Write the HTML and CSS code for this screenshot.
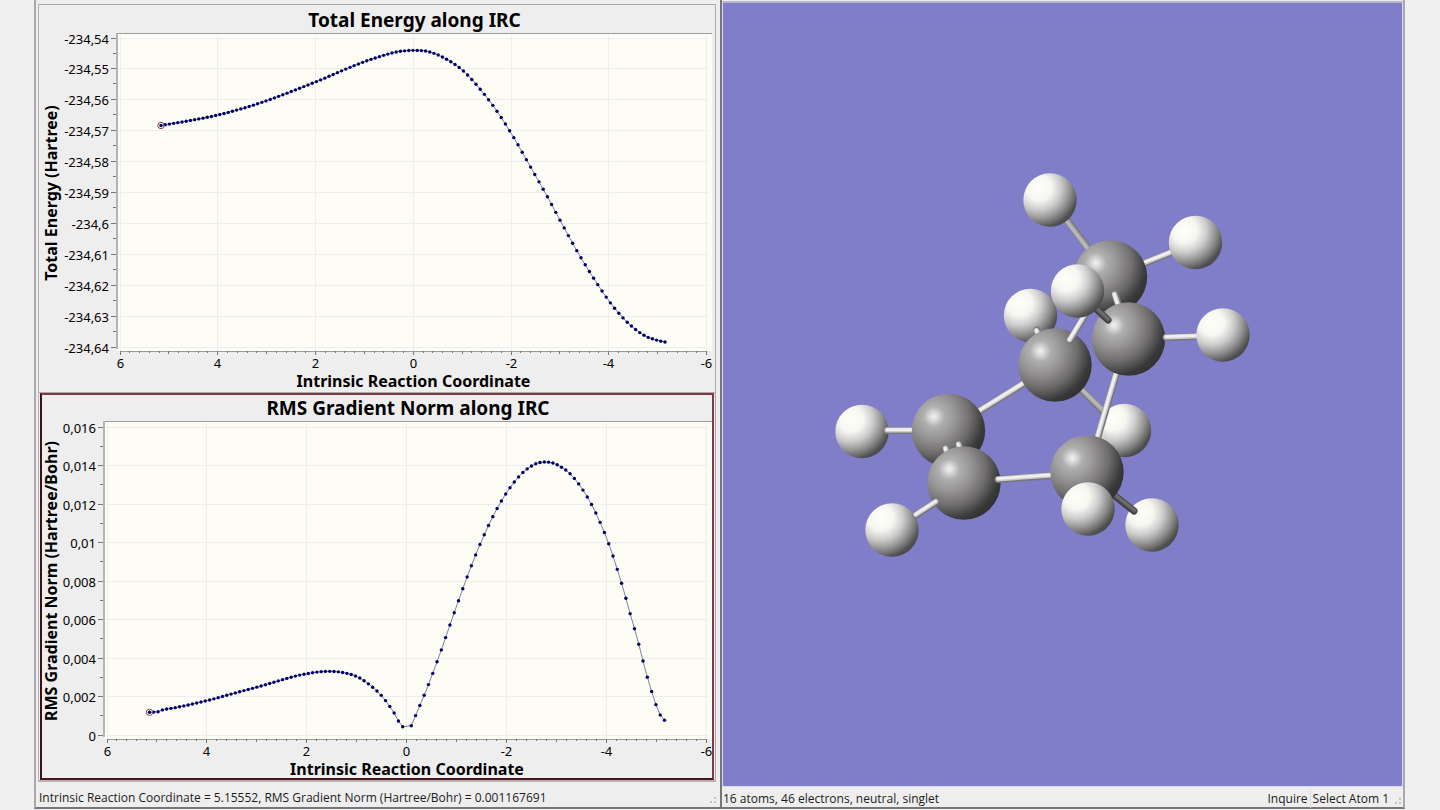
FILE: index.html
```html
<!DOCTYPE html>
<html lang="en">
<head>
<meta charset="utf-8">
<title>IRC viewer</title>
<link rel="stylesheet" href="styles.css">
</head>
<body>
<main class="workspace">
  <section class="window plots" aria-label="IRC plots">
    <div class="panels">
      <svg class="chart" id="energy" viewBox="39 5 676 387" role="img" aria-label="Total Energy along IRC"></svg>
      <svg class="chart chart-active" id="gradient" viewBox="42 395 670 383" role="img" aria-label="RMS Gradient Norm along IRC"></svg>
    </div>
    <footer class="status status-left">
      <span>Intrinsic Reaction Coordinate = 5.15552, RMS Gradient Norm (Hartree/Bohr) = 0.001167691</span>
      <i class="grip"></i>
    </footer>
  </section>
  <section class="window viewer" aria-label="Molecule">
    <svg class="molecule" id="molecule" viewBox="723 3 679 783" role="img" aria-label="Molecule model">
      <defs>
        <radialGradient id="hydrogen" cx=".29" cy=".27" r=".84">
          <stop offset="0" stop-color="#fffffa"/>
          <stop offset=".28" stop-color="#f7f7f2"/>
          <stop offset=".5" stop-color="#cccbcb"/>
          <stop offset=".72" stop-color="#8c8a8a"/>
          <stop offset=".9" stop-color="#504f4f"/>
          <stop offset="1" stop-color="#494848"/>
        </radialGradient>
        <radialGradient id="carbon" cx=".3" cy=".31" r=".83">
          <stop offset="0" stop-color="#f2f2f2"/>
          <stop offset=".06" stop-color="#dddddd"/>
          <stop offset=".17" stop-color="#b0afb0"/>
          <stop offset=".36" stop-color="#969495"/>
          <stop offset=".6" stop-color="#6e6c6d"/>
          <stop offset=".82" stop-color="#3a393a"/>
          <stop offset="1" stop-color="#2e2d2e"/>
        </radialGradient>
      </defs>
    </svg>
    <footer class="status status-right">
      <span class="summary">16 atoms, 46 electrons, neutral, singlet</span>
      <span class="mode">Inquire</span>
      <span class="hint">Select Atom 1</span>
      <i class="grip"></i>
    </footer>
  </section>
</main>
<script src="app.js"></script>
</body>
</html>
```
FILE: styles.css
```css
* { box-sizing: border-box; }

body {
  margin: 0;
  background: #f0f0f0;
  color: #000;
  font-family: "Noto Sans", "Open Sans", sans-serif;
}

.workspace {
  display: grid;
  grid-template-columns: 686fr 685fr;
  height: 100vh;
  padding: 0 35px 1px 34px;
}

.window {
  display: flex;
  flex-direction: column;
  min-width: 0;
  border-bottom: 2px solid #77757a;
  background: #efeeee;
}

.plots {
  border-left: 2px solid #aaa8ae;
  padding: 4px 4px 0 2px;
}

.panels {
  display: flex;
  flex: 1;
  flex-direction: column;
  min-height: 0;
  border-right: 1px solid #aaa8a8;
  border-bottom: 2px solid #b8b0ac;
  border-left: 1px solid #b5b3b3;
}

.chart {
  display: block;
  flex: 387 1 0;
  min-height: 0;
  width: 100%;
  border-top: 1px solid #aaa8a8;
  border-bottom: 1px solid #aaa8a8;
  background: #efeeee;
}

.chart-active {
  flex-grow: 383;
  margin: 0 1px;
  width: calc(100% - 2px);
  border: 2px solid #7d3a44;
  border-left-color: #3b1019;
  border-bottom-color: #4b141e;
}

.plot-area { fill: #fdfdf5; }
.grid-line { stroke: #eeeef0; }
.axis-line { stroke: #9c9ca0; }
.axis-wide { stroke: #b4b4b6; stroke-width: 2; }
.tick { stroke: #77777b; }
.curve { fill: none; stroke: #8080a0; }
.point { fill: #00006c; }
.selected { fill: none; stroke: #8a4050; }
.tick-label { font-size: 13px; }
.axis-title { font-size: 16px; font-weight: 700; text-anchor: middle; }
.chart-title { font-size: 19px; font-weight: 700; text-anchor: middle; }
.end { text-anchor: end; }
.middle { text-anchor: middle; }

.viewer {
  border-right: 2px solid #aaa8ae;
  border-left: 2px solid #77757a;
  padding-top: 1px;
}

.molecule {
  display: block;
  flex: 1;
  min-height: 0;
  width: 100%;
  border: 1px solid #dddaf0;
  border-top: 2px solid #b8b6cc;
  background: #807ec8;
}

.status {
  display: flex;
  flex: none;
  align-items: center;
  color: #1c1c1c;
  font-family: "Open Sans", sans-serif;
  font-size: 12px;
  line-height: 18px;
}

.status-left { height: 25px; padding: 6px 0 0 1px; }
.status-right { height: 20px; padding: 4px 2px 0 1px; }
.summary { flex: 1; }
.mode { padding-right: 2px; }
.hint { border-left: 1px solid #dcdada; padding-left: 2px; }

.grip {
  width: 6px;
  height: 6px;
  margin: 4px 0 0 auto;
  border: 2px dotted #c4c2c2;
  border-top: 0;
  border-left: 0;
}

.hint + .grip { margin-left: 6px; }
```
FILE: app.js
```js
const NS = "http://www.w3.org/2000/svg";

function add(parent, name, attrs, text) {
  const el = document.createElementNS(NS, name);
  for (const key in attrs) el.setAttribute(key, attrs[key]);
  if (text !== undefined) el.textContent = text;
  parent.appendChild(el);
  return el;
}

// Cubic Hermite interpolation through the sampled curve.
function interpolate(samples, x) {
  let i = 0;
  while (i < samples.length - 2 && x > samples[i + 1][0]) i++;
  const slope = (a, b) => (samples[b][1] - samples[a][1]) / (samples[b][0] - samples[a][0]);
  const tangent = k => slope(Math.max(0, k - 1), Math.min(samples.length - 1, k + 1));
  const [x0, y0] = samples[i], [x1, y1] = samples[i + 1];
  const h = x1 - x0, t = (x - x0) / h;
  return (2 * t ** 3 - 3 * t ** 2 + 1) * y0 + (t ** 3 - 2 * t ** 2 + t) * h * tangent(i) +
    (3 * t ** 2 - 2 * t ** 3) * y1 + (t ** 3 - t ** 2) * h * tangent(i + 1);
}

function drawChart(c) {
  const svg = document.getElementById(c.id);
  const zero = (c.x6 + 706.5) / 2, unit = (706.5 - c.x6) / 12;
  const middle = (c.left + 712) / 2;
  const line = (cls, x1, y1, x2, y2) => add(svg, "line", { class: cls, x1, y1, x2, y2 });
  const snap = v => Math.floor(v) + 0.5;

  add(svg, "text", { class: "chart-title", x: middle, y: c.top - 6 }, c.title);
  add(svg, "rect", { class: "plot-area", x: c.left, y: c.top, width: 712 - c.left, height: c.bottom - c.top });
  line("axis-line", c.left - 1, c.top + 0.5, 712, c.top + 0.5);
  line("axis-wide", c.left, c.top, c.left, c.bottom - 2);
  line("axis-line", c.x6, c.bottom + 0.5, 707, c.bottom + 0.5);

  const step = (c.yEnd - c.yStart) / (c.labels.length - 1);
  c.labels.forEach((label, i) => {
    const y = snap(c.yStart + i * step);
    line("grid-line", c.left + 2, y, 708, y);
    line("tick", c.left - 6, y, c.left - 1, y);
    if (i < c.labels.length - 1) {
      const half = snap(y + step / 2);
      line("tick", c.left - 4, half, c.left - 1, half);
    }
    add(svg, "text", { class: "tick-label end", x: c.left - 8, y: y + 5 }, label);
  });

  for (let v = 30; v >= -30; v--) {
    const x = snap(zero - v / 5 * unit);
    const major = v % 10 === 0;
    if (major) line("grid-line", x, c.top + 2, x, c.bottom);
    line("tick", x, c.bottom, x, c.bottom + (major ? 4 : v % 5 === 0 ? 3 : 2));
    if (major) add(svg, "text", { class: "tick-label middle", x, y: c.bottom + 17 }, String(-v / -5));
  }
  add(svg, "text", { class: "axis-title", x: middle - 1, y: c.bottom + 36 }, "Intrinsic Reaction Coordinate");
  add(svg, "text", { class: "axis-title", transform: `translate(57 ${c.labelY}) rotate(-90)` }, c.yTitle);

  const first = c.samples[0], last = c.samples[c.samples.length - 1];
  const points = [];
  for (let i = 0; i <= 120; i++) {
    if (i === c.skip) continue;
    const x = first[0] + (last[0] - first[0]) * i / 120;
    points.push([x, interpolate(c.samples, x)]);
  }
  add(svg, "polyline", { class: "curve", points: points.map(p => p.join()).join(" ") });
  for (const [x, y] of points) add(svg, "circle", { class: "point", cx: x, cy: y, r: 1.7 });
  add(svg, "circle", { class: "selected", cx: first[0], cy: first[1], r: 3.2 });
}

drawChart({
  id: "energy", title: "Total Energy along IRC", yTitle: "Total Energy (Hartree)",
  x6: 120, left: 117, top: 33, bottom: 351, yStart: 38, yEnd: 347, labelY: 193,
  labels: ["-234,54", "-234,55", "-234,56", "-234,57", "-234,58", "-234,59", "-234,6", "-234,61", "-234,62", "-234,63", "-234,64"],
  samples: [[161, 125.5], [190, 120.5], [220, 114.5], [262, 102.3], [316.7, 81.5], [341.3, 71], [362.7, 62.3],
    [383.7, 55.3], [396.7, 51.9], [405, 50.8], [417.7, 50.4], [430, 52], [446.7, 59.3], [463.7, 71.3], [480.3, 89.3],
    [497, 111.3], [514, 138], [530.7, 167.3], [547.7, 197.3], [560.3, 220.7], [577, 251], [593.7, 278.3],
    [610.3, 302.7], [627.3, 322.3], [644, 335.3], [656.3, 340], [665, 342]]
});

drawChart({
  id: "gradient", title: "RMS Gradient Norm along IRC", yTitle: "RMS Gradient Norm (Hartree/Bohr)",
  x6: 107, left: 104, top: 421, bottom: 739, yStart: 427, yEnd: 735, labelY: 581, skip: 60,
  labels: ["0,016", "0,014", "0,012", "0,01", "0,008", "0,006", "0,004", "0,002", "0"],
  samples: [[149.5, 712.3], [158, 711.7], [162.3, 709.9], [178.7, 707], [209.3, 700], [235, 693], [261, 686],
    [290.7, 677.3], [303.7, 674.3], [320.7, 671.7], [334, 671.5], [346.7, 673.3], [359.7, 678], [376.7, 690.7],
    [385.3, 700.3], [393.7, 712.3], [402.3, 726.5], [411.3, 725.7], [415.3, 716.3], [428.3, 685], [441.3, 650],
    [454, 613.3], [471, 566.7], [484, 535.3], [497, 508.7], [510, 487.7], [522.7, 472.7], [535.3, 464],
    [546.7, 462], [557, 464.7], [570, 473.7], [582.7, 489.7], [595.7, 512.7], [608.7, 543.7], [621.3, 582.3],
    [629.7, 612], [638.7, 644], [647, 676], [655.7, 704], [659.7, 714], [664.5, 720.3]]
});

const molecule = document.getElementById("molecule");

function atom(kind, cx, cy) {
  add(molecule, "circle", { cx, cy, r: kind === "carbon" ? 36.7 : 26.7, fill: `url(#${kind})` });
}

const tones = {
  light: ["#77767c", "#cccccc", "#f0f0f0"],
  grey: ["#79787d", "#a5a5a5", "#b9b9b9"],
  dark: ["#3c3c3d", "#555455", "#6e6d6e"]
};

function bond(x1, y1, x2, y2, tone = "light") {
  const length = Math.hypot(x2 - x1, y2 - y1);
  let nx = (y2 - y1) / length, ny = -(x2 - x1) / length;
  if (nx + ny > 0) { nx = -nx; ny = -ny; }
  [[7, 0], [5, 0.6], [2.6, 0.9]].forEach(([width, shift], i) => add(molecule, "line", {
    x1: x1 + nx * shift, y1: y1 + ny * shift, x2: x2 + nx * shift, y2: y2 + ny * shift,
    stroke: tones[tone][i], "stroke-width": width, "stroke-linecap": "round"
  }));
}

// Drawn from back to front.
bond(1060, 211, 1095, 257, "grey");
atom("hydrogen", 1050, 200);
bond(1125, 271, 1185, 247);
atom("hydrogen", 1195.5, 242.5);
atom("carbon", 1110.5, 277);
bond(1115, 294, 1121, 312);
atom("hydrogen", 1030.5, 315.5);
bond(1037, 330, 1042, 342);
bond(970, 417, 1040, 373.5);
bond(1070, 379, 1115, 423, "grey");
atom("hydrogen", 1124.5, 430.5);
atom("carbon", 1055, 365);
bond(1090, 307, 1070, 340);
bond(1122, 355, 1094, 450);
atom("carbon", 1128.5, 339);
bond(1166, 337.5, 1210, 336);
atom("hydrogen", 1223, 335);
bond(1092, 305, 1108, 320, "dark");
atom("hydrogen", 1077.5, 291);
atom("hydrogen", 862, 431.5);
bond(887, 430.5, 925, 430.5);
atom("carbon", 948.5, 430.5);
bond(946, 448, 950, 462);
bond(959, 444, 963, 458);
atom("carbon", 964, 483);
bond(998, 479.5, 1060, 475);
atom("hydrogen", 892, 530);
bond(916, 515, 936, 502);
atom("hydrogen", 1152, 525);
bond(1105, 488, 1134, 511, "dark");
atom("carbon", 1087, 472);
atom("hydrogen", 1088, 509);
```
